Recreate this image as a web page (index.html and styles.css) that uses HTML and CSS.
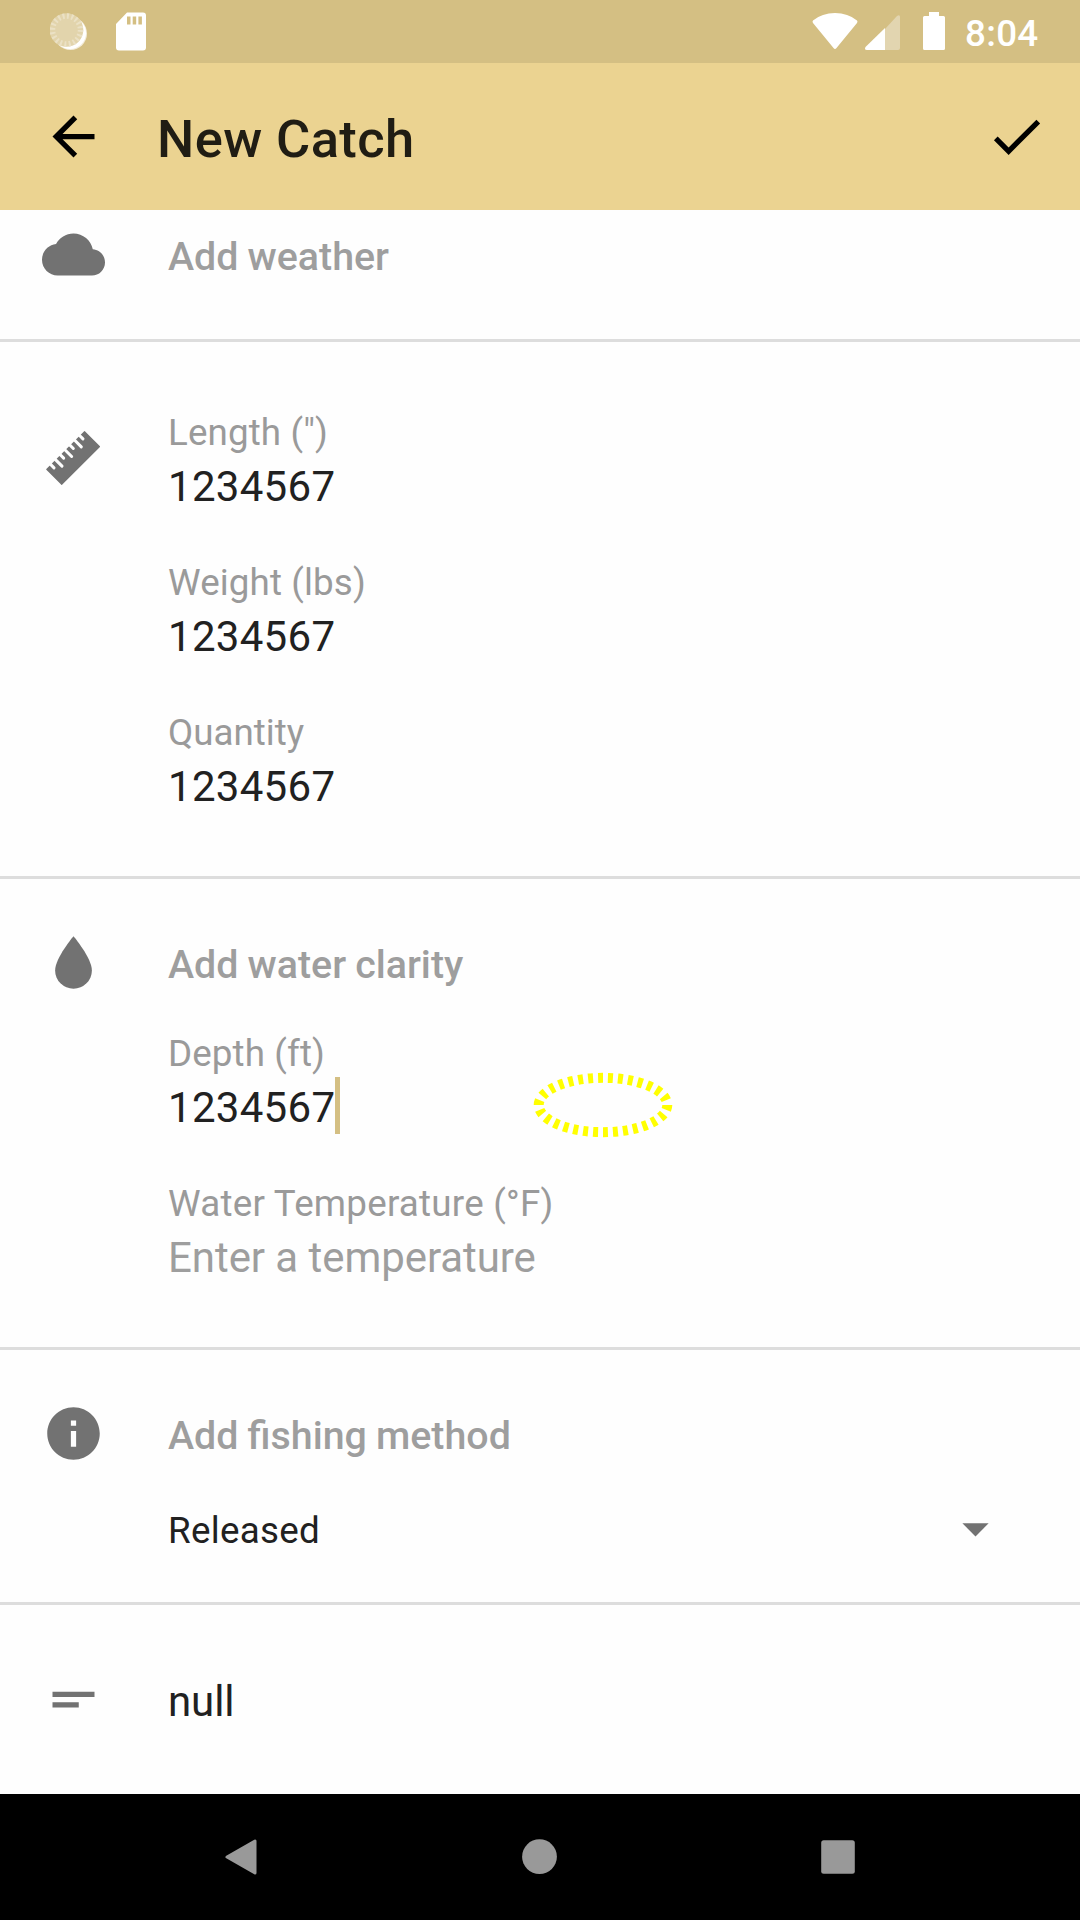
FILE: index.html
```html
<!DOCTYPE html>
<html lang="en">
<head>
<meta charset="utf-8">
<title>New Catch</title>
<link rel="stylesheet" href="styles.css">
</head>
<body>
<div class="screen">
  <div class="status">
    <svg class="sync" width="40" height="40" viewBox="0 0 40 40"><circle cx="20.500" cy="21.500" r="16.500" fill="#f3ecda"/><circle cx="20" cy="21" r="16" fill="#fff"/><circle cx="16.500" cy="18" r="16.800" fill="#e2d4ac"/><circle cx="16.500" cy="18" r="14" fill="none" stroke="#ebe1c5" stroke-width="5.500" stroke-dasharray="2 2.400"/></svg>
    <svg class="sd" width="32" height="40" viewBox="0 0 32 40"><path fill="#fff" fill-rule="evenodd" d="M12 .5H28Q31 .5 31 3.500V35.500Q31 38.500 28 38.500H4Q1 38.500 1 35.500V12ZM12 4.500V12.500H15.500V4.500ZM17.700 4.500V12.500H21.200V4.500ZM23.400 4.500V12.500H26.900V4.500Z"/></svg>
    <span class="spacer"></span>
    <svg class="wifi" width="46" height="37" viewBox="0 0 46 37"><path fill="#fff" d="M1 7.500Q10 0 23 0T45 7.500Q46 8.800 45 10L24.500 35Q23 37 21.500 35L1 10Q0 8.800 1 7.500Z"/></svg>
    <svg class="signal" width="35" height="35" viewBox="0 0 35 35"><path fill="#e2d5b0" d="M20 14 32 1Q35-1 35 2V33Q35 35 33 35H20Z"/><path fill="#fff" d="M20 13V35H2Q-1 35 .5 32Z"/></svg>
    <svg class="battery" width="22" height="38" viewBox="0 0 22 38"><path fill="#fff" d="M6 0H16V4H20.500Q22 4 22 5.500V36.500Q22 38 20.500 38H1.500Q0 38 0 36.500V5.500Q0 4 1.500 4H6Z"/></svg>
    <span class="clock">8:04</span>
  </div>
  <header class="bar">
    <svg class="icon" viewBox="0 0 24 24"><path d="M20 11H7.830l5.590-5.590L12 4l-8 8 8 8 1.410-1.410L7.830 13H20v-2z"/></svg>
    <h1 class="title">New Catch</h1>
    <svg class="icon" viewBox="0 0 24 24"><path d="M9 16.170 4.830 12l-1.420 1.410L9 19 21 7l-1.410-1.410z"/></svg>
  </header>
  <main class="form">
    <section class="group weather">
      <svg class="icon" viewBox="0 0 24 24"><path d="M19.350 10.040C18.670 6.590 15.640 4 12 4 9.110 4 6.600 5.640 5.350 8.040 2.340 8.360 0 10.910 0 14c0 3.310 2.690 6 6 6h13c2.760 0 5-2.240 5-5 0-2.640-2.050-4.780-4.650-4.960z"/></svg>
      <div class="fields"><div class="add">Add weather</div></div>
    </section>
    <section class="group size">
      <svg class="icon" viewBox="0 0 24 24"><g transform="translate(11.860 11.800) rotate(-45)"><rect x="-10.400" y="-4.250" width="20.800" height="8.500" rx=".2"/><path class="ticks" d="M-7.800-5v2.500M-5.200-5v4.200M-2.600-5v2.500M0-5v4.200M2.600-5v2.500M5.200-5v4.200M7.800-5v2.500"/></g></svg>
      <div class="fields">
        <div class="field"><div class="label">Length (")</div><div class="value">1234567</div></div>
        <div class="field"><div class="label">Weight (lbs)</div><div class="value">1234567</div></div>
        <div class="field"><div class="label quantity">Quantity</div><div class="value">1234567</div></div>
      </div>
    </section>
    <section class="group water">
      <svg class="icon" viewBox="0 0 24 24"><path d="M12 2C12 2 5 10.300 5 15a7 7 0 0 0 14 0C19 10.300 12 2 12 2z"/></svg>
      <div class="fields">
        <div class="add">Add water clarity</div>
        <div class="field"><div class="label">Depth (ft)</div><div class="value focused">1234567<span class="caret"></span></div></div>
        <div class="field"><div class="label temperature">Water Temperature (°F)</div><div class="value hint">Enter a temperature</div></div>
      </div>
      <svg class="touch" width="140" height="66" viewBox="0 0 140 66"><ellipse cx="70" cy="33" rx="64.300" ry="27.200" pathLength="300" fill="none" stroke="#ff0" stroke-width="10" stroke-dasharray="5 5"/></svg>
    </section>
    <section class="group method">
      <svg class="icon" viewBox="0 0 24 24"><path d="M12 2C6.480 2 2 6.480 2 12s4.480 10 10 10 10-4.480 10-10S17.520 2 12 2zm1 15h-2v-6h2v6zm0-8h-2V7h2v2z"/></svg>
      <div class="fields">
        <div class="add">Add fishing method</div>
        <div class="select"><span class="choice">Released</span><svg class="icon" viewBox="0 0 24 24"><path d="M7 10l5 5 5-5z"/></svg></div>
      </div>
    </section>
    <section class="group notes">
      <svg class="icon" viewBox="0 0 24 24"><path d="M4 9h16v2H4zm0 4h10v2H4z"/></svg>
      <div class="fields"><div class="value note">null</div></div>
    </section>
  </main>
  <nav class="nav">
    <svg width="36" height="40" viewBox="0 0 36 40"><path d="M33 4V36L5 20Z" fill="#999" stroke="#999" stroke-width="3" stroke-linejoin="round"/></svg>
    <svg width="36" height="36" viewBox="0 0 36 36"><circle cx="18.500" cy="17.700" r="17.400" fill="#999"/></svg>
    <svg width="36" height="36" viewBox="0 0 36 36"><rect x="1.200" y="1.200" width="33.600" height="33.600" rx="2.500" fill="#999"/></svg>
  </nav>
</div>
</body>
</html>
```
FILE: styles.css
```css
* { box-sizing: border-box; }
body { margin: 0; font-family: Roboto, sans-serif; color: #212121; background: #fefefe; }
svg { display: block; flex: none; }
.screen { width: 1080px; height: 1920px; display: flex; flex-direction: column; overflow: hidden; }

.status { height: 63px; background: #d4bf83; display: flex; align-items: flex-start; padding: 12px 43px 0 50px; }
.sd { margin-left: 25px; }
.spacer { flex: 1; }
.wifi { margin-top: 1px; }
.signal { margin: 3px 0 0 7px; }
.battery { margin-left: 23px; }
.clock { margin-left: 20px; width: 72px; color: #fff; font-size: 36.75px; font-weight: 500; line-height: 43px; letter-spacing: .3px; white-space: nowrap; }

.bar { height: 147px; background: #ebd391; display: flex; align-items: center; padding: 0 32px 0 42px; }
.title { flex: 1; margin: 0 0 0 52px; font-size: 52.5px; font-weight: 500; line-height: 62px; letter-spacing: .4px; color: #201d14; padding-top: 5px; }
.bar .icon { fill: #000; }

.icon { width: 63px; height: 63px; fill: #727272; flex: none; }
.ticks { fill: none; stroke: #fefefe; stroke-width: 1.15; stroke-linecap: round; }
.form { flex: 1; }
.group { position: relative; display: flex; align-items: flex-start; padding-left: 42px; border-bottom: 3px solid #ddd; }
.fields { flex: 1; margin-left: 63px; }
.add { font-size: 39.375px; font-weight: 500; line-height: 46px; word-spacing: -.7px; color: #9e9e9e; }
.label { font-size: 36.75px; line-height: 43px; letter-spacing: .12px; color: #9a9a9a; }
.quantity { letter-spacing: 0; }
.temperature { letter-spacing: .23px; }
.value { font-size: 42px; line-height: 50px; margin-top: 8px; letter-spacing: .3px; }
.hint { color: #9e9e9e; letter-spacing: -.06px; }
.field + .field { margin-top: 49px; }

.weather { height: 132px; padding-top: 13px; }
.weather .add { margin-top: 11px; }
.size { height: 537px; padding-top: 69px; }
.size .icon { margin-top: 16px; }
.water { height: 471px; padding-top: 52px; }
.water .add { margin: 11px 0 44px; }
.method { height: 255px; padding-top: 52px; }
.method .add { margin-top: 11px; }
.notes { height: 189px; padding-top: 63px; border-bottom: 0; }
.notes .value { margin-top: 9px; letter-spacing: -.1px; }

.focused { display: flex; }
.caret { width: 5px; height: 57px; margin: -6px 0 -1px 0; background: #d4bf83; }
.touch { position: absolute; left: 533px; top: 193px; }
.select { display: flex; justify-content: space-between; align-items: center; margin-top: 38px; padding-right: 73px; font-size: 36.75px; line-height: 43px; }
.choice { padding-top: 3px; letter-spacing: .3px; }

.nav { height: 126px; background: #000; display: flex; align-items: center; justify-content: space-between; padding: 0 224px 0 222px; }
```
